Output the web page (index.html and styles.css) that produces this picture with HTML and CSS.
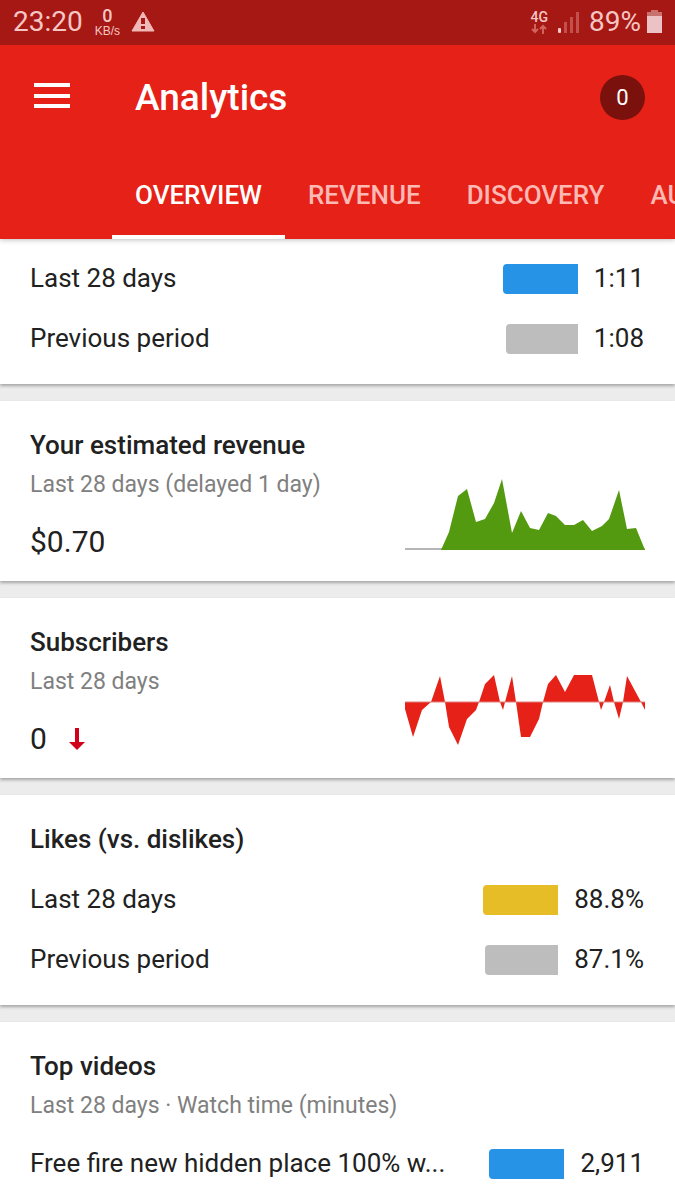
FILE: index.html
```html
<!DOCTYPE html>
<html lang="en">
<head>
    <meta charset="UTF-8">
    <meta name="viewport" content="width=device-width, initial-scale=1.0">
    <title>Analytics</title>
    <link rel="stylesheet" href="styles.css">
</head>
<body>
    <header class="header">
        <div class="status-bar">
            <span class="clock">23:20</span>
            <div class="net-speed">
                <span class="net-value">0</span>
                <span class="net-unit">KB/s</span>
            </div>
            <svg class="warning" width="24" height="22" viewBox="0 0 24 22">
                <path d="M12 1 L23 20 H1 Z" fill="#f0b8b6" stroke="#f0b8b6" stroke-width="1" stroke-linejoin="round"/>
                <path d="M10 7h4v6h-4z M10 15h4v3h-4z" fill="#a51813"/>
            </svg>
            <div class="status-right">
                <div class="network">
                    <span>4G</span>
                    <svg width="16" height="10" viewBox="0 0 16 10" fill="none" stroke="#d2625e" stroke-width="2">
                        <path d="M4 0v8M1 5l3 3 3-3M12 10V2M9 5l3-3 3 3"/>
                    </svg>
                </div>
                <svg class="signal" width="21" height="22" viewBox="0 0 21 22">
                    <rect x="0" y="17" width="3" height="5" rx="1" fill="#f5c6c4"/>
                    <path d="M6 11h3v11H6zM12 6h3v16h-3zM18 1h3v21h-3z" fill="#c4504c"/>
                </svg>
                <span class="battery-level">89%</span>
                <svg width="15" height="23" viewBox="0 0 15 23">
                    <path d="M4 0h7v2h4v4H0V2h4z" fill="#c9716e"/>
                    <path d="M0 6h15v17H0z" fill="#ebc3c6"/>
                </svg>
            </div>
        </div>

        <div class="app-bar">
            <button class="menu-button" aria-label="Menu">
                <svg width="36" height="26" viewBox="0 0 36 26" fill="#fff">
                    <path d="M0 0h36v4H0zM0 11h36v4H0zM0 21h36v4H0z"/>
                </svg>
            </button>
            <h1>Analytics</h1>
            <button class="badge">0</button>
        </div>

        <nav class="tabs">
            <a href="#overview" class="tab active">OVERVIEW</a>
            <a href="#revenue" class="tab">REVENUE</a>
            <a href="#discovery" class="tab">DISCOVERY</a>
            <a href="#au" class="tab">AU</a>
        </nav>
    </header>

    <main id="overview">
        <section class="card card-first">
            <div class="row">
                <span class="row-label">Last 28 days</span>
                <div class="track"><div class="bar blue" style="width: 100%"></div></div>
                <span class="row-value">1:11</span>
            </div>
            <div class="row">
                <span class="row-label">Previous period</span>
                <div class="track"><div class="bar gray" style="width: 96%"></div></div>
                <span class="row-value">1:08</span>
            </div>
        </section>

        <section class="card card-chart">
            <div class="summary">
                <h2>Your estimated revenue</h2>
                <p class="subtitle">Last 28 days (delayed 1 day)</p>
                <p class="total">$0.70</p>
            </div>
            <svg class="chart" width="240" height="75" viewBox="0 0 240 75">
                <path d="M0 73h240v2H0z" fill="#b5b5b5"/>
                <path d="M36 75L44 57L53 21L62 14L71 47L80 44L89 28L97 4L107 58L116 36L125 53L134 55L143 38L151 41L160 50L169 50L178 45L187 56L197 51L204 44L214 15L222 54L231 53L240 75Z" fill="#539a10"/>
            </svg>
        </section>

        <section class="card card-chart">
            <div class="summary">
                <h2>Subscribers</h2>
                <p class="subtitle">Last 28 days</p>
                <p class="total">
                    0
                    <svg class="arrow-down" width="16" height="22" viewBox="0 0 16 22">
                        <path d="M6 0h4v14h6l-8 8-8-8h6z" fill="#d0021b"/>
                    </svg>
                </p>
            </div>
            <svg class="chart" width="240" height="75" viewBox="0 0 240 75">
                <path d="M0 30V37L8 65L17 38L26 30L35 4L40 30L44 55L53 73L62 47L71 38L74 30L80 12L89 3L95 30L98 38L100 30L107 4L111 30L116 65L125 65L134 47L138 30L143 12L151 3L160 20L169 3L187 3L194 30L196 38L199 30L205 13L209 30L214 47L218 30L222 4L236 30L240 38V30Z" fill="#e62117"/>
                <path d="M0 30h240" stroke="#e0807c" stroke-width="1"/>
            </svg>
        </section>

        <section class="card">
            <h2>Likes (vs. dislikes)</h2>
            <div class="row">
                <span class="row-label">Last 28 days</span>
                <div class="track"><div class="bar yellow" style="width: 100%"></div></div>
                <span class="row-value">88.8%</span>
            </div>
            <div class="row">
                <span class="row-label">Previous period</span>
                <div class="track"><div class="bar gray" style="width: 98%"></div></div>
                <span class="row-value">87.1%</span>
            </div>
        </section>

        <section class="card">
            <h2>Top videos</h2>
            <p class="subtitle">Last 28 days · Watch time (minutes)</p>
            <div class="row">
                <span class="row-label">Free fire new hidden place 100% w...</span>
                <div class="track"><div class="bar blue" style="width: 100%"></div></div>
                <span class="row-value">2,911</span>
            </div>
        </section>
    </main>
</body>
</html>
```
FILE: styles.css
```css
* {
    box-sizing: border-box;
}
body {
    margin: 0;
    font-family: Roboto, sans-serif;
    font-size: 26px;
    line-height: 30px;
    color: #212121;
    background-color: #ececec;
}
h1, h2, p {
    margin: 0;
}
button {
    border: none;
    padding: 0;
    font-family: inherit;
    color: #fff;
    cursor: pointer;
}
svg {
    display: block;
    flex-shrink: 0;
}

/* Header */
.header {
    position: relative;
    background-color: #e62117;
    color: #fff;
    box-shadow: 0 1px 5px rgba(0, 0, 0, 0.25);
}
.status-bar {
    display: flex;
    align-items: center;
    height: 45px;
    padding: 0 13px 2px;
    background-color: #a51813;
    color: #f5c6c4;
    font-size: 28px;
}
.net-speed {
    display: flex;
    flex-direction: column;
    align-items: center;
    margin: 0 11px 0 12px;
    font-weight: 500;
}
.net-value {
    font-size: 18px;
    line-height: 18px;
}
.net-unit {
    font-family: "Liberation Sans", sans-serif;
    font-size: 12px;
    line-height: 12px;
}
.status-right {
    display: flex;
    align-items: center;
    margin-left: auto;
}
.network {
    display: flex;
    flex-direction: column;
    align-items: center;
    font-size: 14px;
    line-height: 14px;
    font-weight: 500;
}
.signal {
    margin: 0 10px;
}
.battery-level {
    margin-right: 6px;
}
.app-bar {
    display: flex;
    align-items: center;
    height: 105px;
    padding: 0 30px 0 34px;
}
.menu-button {
    width: 101px;
    padding-bottom: 3px;
    background: none;
}
h1 {
    flex: 1;
    font-size: 37px;
    line-height: 44px;
    font-weight: 500;
}
.badge {
    width: 45px;
    height: 45px;
    border-radius: 50%;
    background-color: #7b110c;
    font-size: 22px;
}
.tabs {
    display: flex;
    height: 89px;
    padding-left: 112px;
    overflow: hidden;
}
.tab {
    flex-shrink: 0;
    display: flex;
    align-items: center;
    padding: 4px 23px 0;
    border-bottom: 4px solid transparent;
    color: #ffb9b4;
    font-weight: 500;
    text-decoration: none;
}
.tab.active {
    color: #fff;
    border-bottom-color: #fff;
}

/* Cards */
.card {
    margin-bottom: 17px;
    padding: 29px 30px 16px;
    background-color: #fff;
    box-shadow: 0 2px 3px rgba(0, 0, 0, 0.3);
}
.card-first {
    padding-top: 9px;
}
.card-chart {
    display: flex;
    align-items: flex-end;
    justify-content: space-between;
    padding-bottom: 22px;
}
h2 {
    font-size: 26px;
    line-height: 30px;
    font-weight: 500;
}
h2 + .row {
    margin-top: 15px;
}
.subtitle {
    margin-top: 12px;
    font-size: 23px;
    line-height: 26px;
    color: #808080;
}
.subtitle + .row {
    margin-top: 14px;
}
.total {
    display: flex;
    align-items: center;
    gap: 22px;
    margin-top: 27px;
    font-size: 30px;
    line-height: 34px;
}
.chart {
    margin-bottom: 9px;
}

/* Rows with a bar */
.row {
    display: flex;
    align-items: center;
    height: 60px;
    padding-right: 1px;
}
.row-label {
    flex: 1;
    white-space: nowrap;
}
.track {
    display: flex;
    justify-content: flex-end;
    width: 75px;
    margin-right: 16px;
    padding-top: 2px;
}
.bar {
    height: 30px;
    border-radius: 4px 0 0 4px;
}
.blue {
    background-color: #2793e6;
}
.gray {
    background-color: #bdbdbd;
}
.yellow {
    background-color: #e6bc27;
}
```
